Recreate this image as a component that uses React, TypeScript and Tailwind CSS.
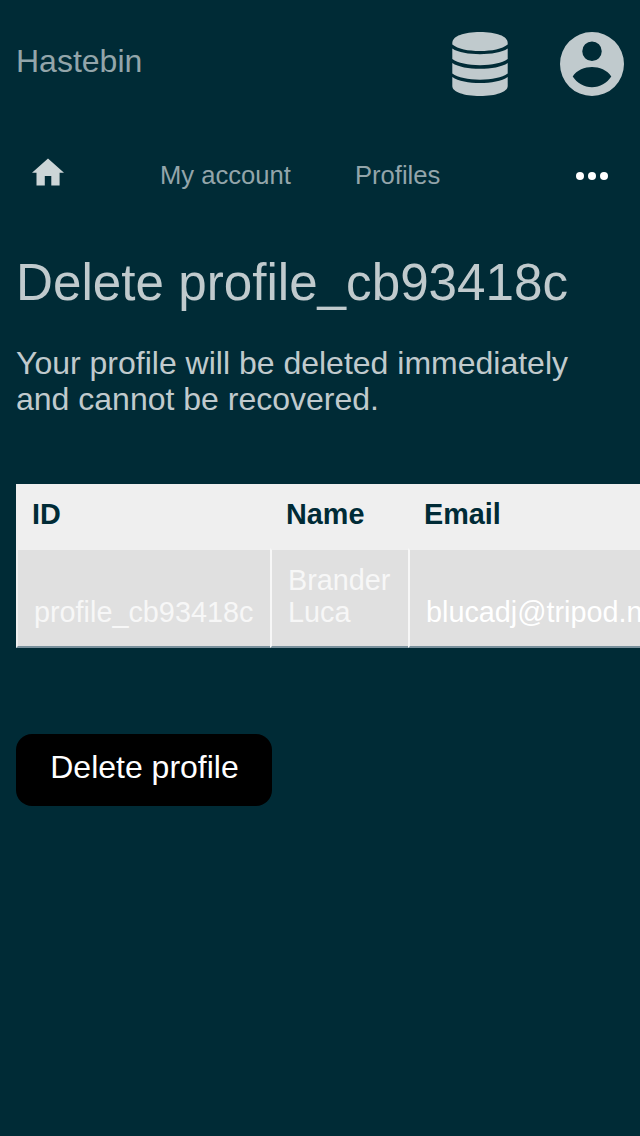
function DatabaseIcon() {
  return (
    <svg className="mr-[52px] h-16 w-14 fill-current" viewBox="0 0 56 64">
      <path d="M.3 11C.3 4 12 0 28 0S55.7 4 55.7 11V12.5C50 17 40 19 28 19S6 17 .3 12.5Z" />
      <path d="M.3 16.5C6 20.5 17 22.2 28 22.2S50 20.5 55.7 16.5V27C50 31 40 33.2 28 33.2S6 31 .3 27Z" />
      <path d="M.3 31C6 35 17 36.8 28 36.8S50 35 55.7 31V41.5C50 45.5 40 47.7 28 47.7S6 45.5 .3 41.5Z" />
      <path d="M.3 45C6 49 17 51 28 51S50 49 55.7 45V54C55.7 60 44 64 28 64S.3 60 .3 54Z" />
    </svg>
  );
}

function AccountIcon() {
  return (
    <svg className="mr-4 size-16 fill-current" viewBox="0 0 64 64">
      <path fillRule="evenodd" d="M32 0a32 32 0 1 1 0 64a32 32 0 1 1 0-64ZM32 9.5a9.75 9.75 0 1 0 0 19.5a9.75 9.75 0 1 0 0-19.5ZM12.7 44.5C17 51 24 55.2 32 55.2S47 51 51.3 44.5C47.5 38 39 35 32 35S16.5 38 12.7 44.5Z" />
    </svg>
  );
}

export default function App() {
  return (
    <div className="flex h-[1136px] w-[640px] flex-col overflow-hidden bg-[#002b36] font-['Liberation_Sans',sans-serif] text-[#c0cacd]">
      <header className="flex h-32 shrink-0 items-center pl-4">
        <span className="-mt-1.5 flex-1 text-[32px] leading-9 text-[#93a5aa]">Hastebin</span>
        <DatabaseIcon />
        <AccountIcon />
      </header>
      <nav className="flex h-24 shrink-0 items-center text-[25.6px] leading-8 text-[#93a5aa]">
        <svg className="mb-2 ml-8 h-7 w-8 fill-[#ccd5d7]" viewBox="0 0 32 28">
          <path d="M16 .5L32 14.8H27.6V27.5H19.3V18H12.8V27.5H4.5V14.8H0Z" />
        </svg>
        <span className="-mt-0.5 ml-24 w-[131px] whitespace-nowrap">My account</span>
        <span className="-mt-0.5 ml-16">Profiles</span>
        <svg className="ml-auto mr-8 size-8 fill-white" viewBox="0 0 32 32">
          <circle cx="4" cy="16" r="4" /><circle cx="16" cy="16" r="4" /><circle cx="28" cy="16" r="4" />
        </svg>
      </nav>
      <main className="flex flex-col items-start pl-4">
        <h1 className="mt-[29px] text-[51.2px] leading-[60px]">Delete profile_cb93418c</h1>
        <p className="mt-8 w-[600px] text-[32px] leading-9">Your profile will be deleted immediately and cannot be recovered.</p>
        <table className="mt-[67px] w-[760px] table-fixed border-separate border-spacing-0 text-left text-[28.8px] leading-8 text-[#f7f7f7]">
          <thead className="bg-[#efefef] text-[#002b36]">
            <tr className="h-16">
              <th className="w-[254px] p-0 pb-1 pl-4">ID</th>
              <th className="w-[138px] p-0 pb-1 pl-4">Name</th>
              <th className="p-0 pb-1 pl-4">Email</th>
            </tr>
          </thead>
          <tbody className="bg-[#e0e0e0]">
            <tr className="h-[100px] align-bottom">
              <td className="border-y-2 border-l-2 border-[#efefef] border-b-[#78909c] p-0 pb-[18px] pl-4">profile_cb93418c</td>
              <td className="border-y-2 border-l-2 border-[#f7f7f7] border-t-[#efefef] border-b-[#78909c] p-0 pb-[18px] pl-4">Brander Luca</td>
              <td className="border-y-2 border-l-2 border-[#f7f7f7] border-t-[#efefef] border-b-[#78909c] p-0 pb-[18px] pl-4 text-white">blucadj@tripod.net</td>
            </tr>
          </tbody>
        </table>
        <button className="mt-[86px] h-[72px] w-64 rounded-2xl bg-black pb-1.5 pl-px text-[32px] text-white">Delete profile</button>
      </main>
    </div>
  );
}
